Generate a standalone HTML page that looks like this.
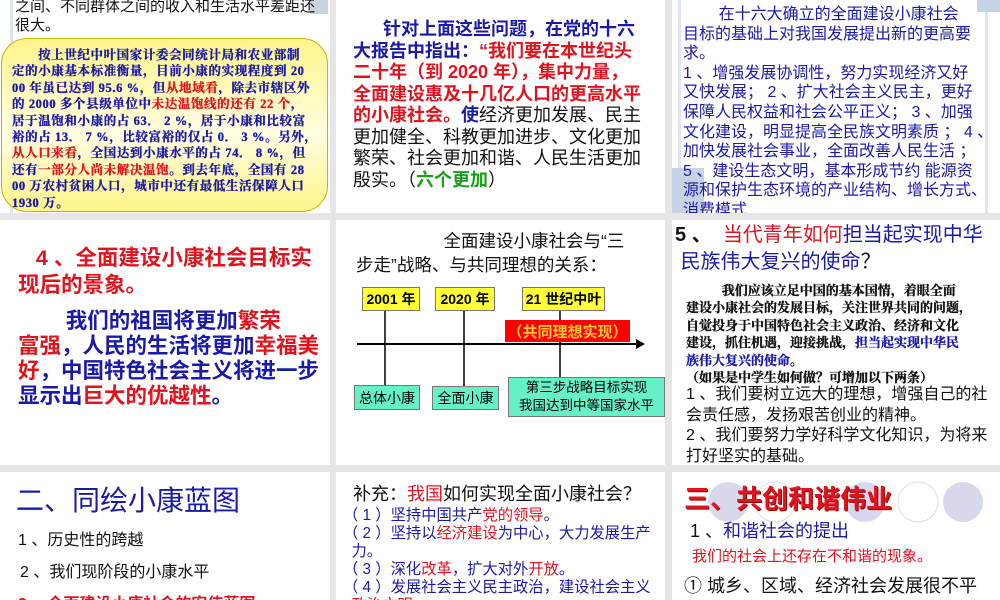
<!DOCTYPE html>
<html><head><meta charset="utf-8"><style>
*{margin:0;padding:0;box-sizing:border-box}
body{width:1000px;height:600px;background:#e6e6e6;position:relative;overflow:hidden;font-family:"Liberation Sans","Noto Sans CJK SC",sans-serif}
.s{position:absolute;background:#fff;overflow:hidden}
.l{position:absolute;white-space:nowrap}
.r{color:#e0141e}.b{color:#1a1aa8}.g{color:#18a018}.k{color:#111}
.bx{position:absolute;border:1px solid #777;display:flex;align-items:center;justify-content:center;white-space:nowrap}
.sf{font-family:'Liberation Serif','Noto Serif CJK SC',serif;font-weight:bold;-webkit-text-stroke:0.35px currentColor}
</style></head><body>

<!-- slide 1 -->
<div class="s" style="left:0;top:0;width:330px;height:213px">
 <div style="position:absolute;left:10px;top:0;width:3px;height:213px;background:#dfe5ee"></div>
 <div style="position:absolute;left:310px;top:0;width:18px;height:14px;background:#c8d2e0"></div>
 <div class="l k" style="left:15px;top:-3px;font-size:15px;line-height:19px">之间、不同群体之间的收入和生活水平差距还<br>很大。</div>
 <div style="position:absolute;left:1px;top:38px;width:327px;height:174px;border:1px solid #c8b400;border-radius:26px;background:linear-gradient(#fff48a,#fffde0 55%,#fff48a)"></div>
 <div class="l b sf" style="left:12px;top:47px;font-size:12.5px;line-height:16.4px;letter-spacing:0.6px">
 &nbsp;&nbsp;&nbsp;&nbsp;&nbsp;&nbsp;&nbsp;按上世纪中叶国家计委会同统计局和农业部制<br>
 定的小康基本标准衡量，目前小康的实现程度到 20<br>
 00 年虽已达到 95.6 %，但<span class="r">从地域看</span>，除去市辖区外<br>
 的 2000 多个县级单位中<span class="r">未达温饱线的还有 22 个</span>，<br>
 居于温饱和小康的占 63． 2 %，居于小康和比较富<br>
 裕的占 13． 7 %，比较富裕的仅占 0． 3 %。另外，<br>
 <span class="r">从人口来看</span>，全国达到小康水平的占 74． 8 %，但<br>
 还有<span class="r">一部分人尚未解决温饱</span>。到去年底，全国有 28<br>
 00 万农村贫困人口，城市中还有最低生活保障人口<br>
 1930 万。</div>
</div>

<!-- slide 2 -->
<div class="s" style="left:336px;top:0;width:329px;height:213px">
 <div class="l" style="left:17px;top:19px;font-size:18px;line-height:21.5px;font-weight:bold">
 <span class="b">&nbsp;&nbsp;&nbsp;&nbsp;&nbsp;&nbsp;针对上面这些问题，在党的十六<br>大报告中指出：</span><span class="r">“我们要在本世纪头<br>二十年（到 2020 年），集中力量，<br>全面建设惠及十几亿人口的更高水平<br>的小康社会。</span><span class="b">使</span><span class="k" style="font-weight:normal">经济更加发展、民主<br>更加健全、科教更加进步、文化更加<br>繁荣、社会更加和谐、人民生活更加<br>殷实。（</span><span class="g">六个更加</span><span class="k" style="font-weight:normal">）</span></div>
</div>

<!-- slide 3 -->
<div class="s" style="left:672px;top:0;width:328px;height:213px">
 <div style="position:absolute;left:6px;top:0;width:3px;height:213px;background:#dfe5ee"></div>
 <div style="position:absolute;left:313px;top:0;width:3px;height:213px;background:#dfe5ee"></div>
 <div style="position:absolute;left:0;top:168px;width:32px;height:45px;background:#c6d2e6"></div>
 <div style="position:absolute;left:305px;top:0;width:23px;height:12px;background:#c6d2e6"></div>
 <div class="l b" style="left:11px;top:5px;font-size:16px;line-height:19.6px">
 &nbsp;&nbsp;&nbsp;&nbsp;&nbsp;&nbsp;&nbsp;&nbsp;在十六大确立的全面建设小康社会<br>目标的基础上对我国发展提出新的更高要<br>求。<br>1 、增强发展协调性，努力实现经济又好<br>又快发展； 2 、扩大社会主义民主，更好<br>保障人民权益和社会公平正义； 3 、加强<br>文化建设，明显提高全民族文明素质 ； 4 、<br>加快发展社会事业，全面改善人民生活 ；<br>5 、建设生态文明，基本形成节约 能源资<br>源和保护生态环境的产业结构、增长方式、<br>消费模式</div>
</div>

<!-- slide 4 -->
<div class="s" style="left:0;top:220px;width:330px;height:245px">
 <div class="l r" style="left:18px;top:25px;font-size:21.5px;line-height:27px;font-weight:bold">&nbsp;&nbsp;&nbsp;4 、全面建设小康社会目标实<br>现后的景象。</div>
 <div class="l b" style="left:18px;top:89px;font-size:21.5px;line-height:25px;font-weight:bold">&nbsp;&nbsp;&nbsp;&nbsp;&nbsp;&nbsp;&nbsp;&nbsp;我们的祖国将更加<span class="r">繁荣</span><br><span class="r">富强</span>，人民的生活将更加<span class="r">幸福美</span><br><span class="r">好</span>，中国特色社会主义将进一步<br>显示出<span class="r">巨大的优越性</span>。</div>
</div>

<!-- slide 5 -->
<div class="s" style="left:336px;top:220px;width:329px;height:245px">
 <div class="l k" style="left:20px;top:9px;font-size:17.5px;line-height:24px">&nbsp;&nbsp;&nbsp;&nbsp;&nbsp;&nbsp;&nbsp;&nbsp;&nbsp;&nbsp;&nbsp;&nbsp;&nbsp;&nbsp;&nbsp;&nbsp;&nbsp;&nbsp;全面建设小康社会与“三<br>步走”战略、与共同理想的关系：</div>
 <svg style="position:absolute;left:0;top:0" width="329" height="245">
  <line x1="49" y1="90" x2="49" y2="172" stroke="#000" stroke-width="1.5"/>
  <line x1="128" y1="90" x2="128" y2="175" stroke="#000" stroke-width="1.5"/>
  <line x1="224" y1="90" x2="224" y2="166" stroke="#000" stroke-width="1.5"/>
  <line x1="21" y1="124" x2="300" y2="124" stroke="#000" stroke-width="2"/>
  <polygon points="300,119 309,124 300,129" fill="#000"/>
 </svg>
 <div class="bx" style="left:26px;top:67px;width:58px;height:24px;background:#ffff33;font-size:14px;font-weight:bold">2001 年</div>
 <div class="bx" style="left:99px;top:67px;width:60px;height:24px;background:#ffff33;font-size:14px;font-weight:bold">2020 年</div>
 <div class="bx" style="left:186px;top:67px;width:83px;height:24px;background:#ffff33;font-size:14px;font-weight:bold">21 世纪中叶</div>
 <div class="bx" style="left:169px;top:100px;width:125px;height:22px;background:#f00;border:none;color:#ffcc33;font-size:15px;font-weight:bold">（共同理想实现）</div>
 <div class="bx" style="left:18px;top:165px;width:66px;height:25px;background:#66f0c8;font-size:14px">总体小康</div>
 <div class="bx" style="left:96px;top:166px;width:67px;height:24px;background:#66f0c8;font-size:14px">全面小康</div>
 <div class="bx" style="left:172px;top:157px;width:157px;height:40px;background:#66f0c8;font-size:13.5px;line-height:18px;text-align:center;white-space:normal">第三步战略目标实现<br>我国达到中等国家水平</div>
</div>

<!-- slide 6 -->
<div class="s" style="left:672px;top:220px;width:328px;height:245px">
 <div class="l" style="left:3px;top:2px;font-size:20px;line-height:27px"><b class="k">5 、</b>&nbsp;&nbsp;<span class="r">当代青年如何</span><span class="b">担当起实现中华</span><br>&nbsp;<span class="b">民族伟大复兴的使命</span><span class="k">？</span></div>
 <div class="l k sf" style="left:14px;top:62px;font-size:13px;line-height:17.4px">&nbsp;&nbsp;&nbsp;&nbsp;&nbsp;&nbsp;&nbsp;&nbsp;&nbsp;&nbsp;&nbsp;我们应该立足中国的基本国情，着眼全面<br>建设小康社会的发展目标，关注世界共同的问题，<br>自觉投身于中国特色社会主义政治、经济和文化<br>建设，抓住机遇，迎接挑战，<span class="b">担当起实现中华民<br>族伟大复兴的使命</span>。<br>（如果是中学生如何做？可增加以下两条）</div>
 <div class="l k" style="left:14px;top:165px;font-size:16px;line-height:20.5px">1 、我们要树立远大的理想，增强自己的社<br>会责任感，发扬艰苦创业的精神。<br>2 、我们要努力学好科学文化知识，为将来<br>打好坚实的基础。</div>
</div>

<!-- slide 7 -->
<div class="s" style="left:0;top:472px;width:330px;height:128px">
 <div class="l b" style="left:16px;top:12px;font-size:28px;line-height:34px">二、同绘小康蓝图</div>
 <div class="l k" style="left:18px;top:54px;font-size:16px">1 、历史性的跨越</div>
 <div class="l k" style="left:20px;top:86px;font-size:16px">2 、我们现阶段的小康水平</div>
 <div class="l r" style="left:18px;top:118px;font-size:16px;font-weight:bold">3 、全面建设小康社会的宏伟蓝图</div>
</div>

<!-- slide 8 -->
<div class="s" style="left:336px;top:472px;width:329px;height:128px">
 <div class="l k" style="left:17px;top:8px;font-size:18px">补充：<span class="r">我国</span>如何实现全面小康社会？</div>
 <div class="l b" style="left:7px;top:35px;font-size:15.3px;line-height:18px">（ 1 ）坚持中国共产<span class="r">党的领导</span>。<br>（ 2 ）坚持以<span class="r">经济建设</span>为中心，大力发展生产<br>&nbsp;&nbsp;力。<br>（ 3 ）深化<span class="r">改革</span>，扩大对外<span class="r">开放</span>。<br>（ 4 ）发展社会主义民主政治，建设社会主义<br>&nbsp;&nbsp;<span class="r">政治文明</span>。</div>
</div>

<!-- slide 9 -->
<div class="s" style="left:672px;top:472px;width:328px;height:128px">
 <svg style="position:absolute;left:0;top:0" width="328" height="128">
  <circle cx="56" cy="30" r="20" fill="#d8d8ec"/>
  <circle cx="103" cy="30" r="20" fill="#fff" stroke="#ddd"/>
  <circle cx="193" cy="30" r="20" fill="#d8d8ec"/>
  <circle cx="246" cy="30" r="20" fill="#fff" stroke="#ddd"/>
  <circle cx="291" cy="30" r="20" fill="#d8d8ec"/>
 </svg>
 <div class="l r" style="left:12px;top:7px;font-size:26px;font-weight:bold;text-shadow:1px 1px 0 #900">三、共创和谐伟业</div>
 <div class="l" style="left:18px;top:45px;font-size:18px"><span class="k">1 、</span><span class="b">和谐社会的提出</span></div>
 <div class="l r" style="left:20px;top:73px;font-size:15px">我们的社会上还存在不和谐的现象。</div>
 <div class="l k" style="left:12px;top:101px;font-size:18px;line-height:26px">① 城乡、区域、经济社会发展很不平<br>衡；② 人口、资源、环境压力加大</div>
</div>

</body></html>
